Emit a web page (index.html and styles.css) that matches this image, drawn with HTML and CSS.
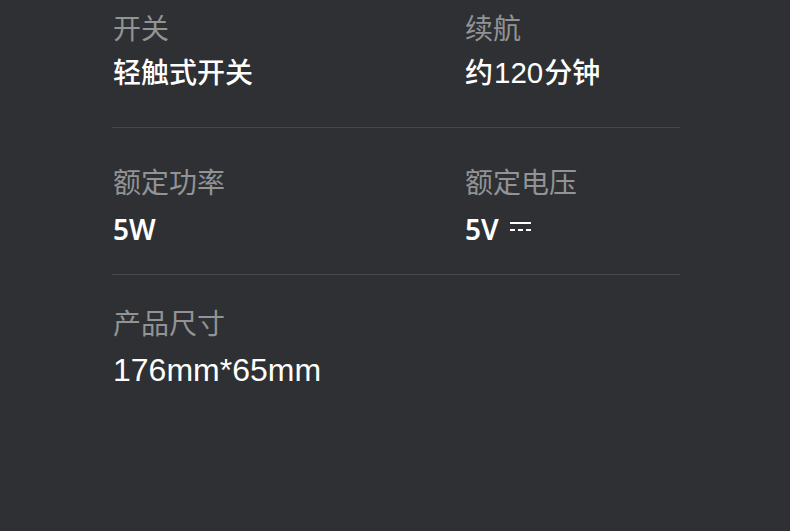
FILE: index.html
```html
<!DOCTYPE html>
<html>
  <head>
    <meta charset="UTF-8">
    <title>产品参数</title>
    <link rel="stylesheet" href="styles.css">
  </head>
  <body>
    <div class="specs">
      <div class="specRow first">
        <div class="spec">
          <div class="specLabel">开关</div>
          <div class="specValue">轻触式开关</div>
        </div>
        <div class="spec">
          <div class="specLabel">续航</div>
          <div class="specValue">约<span class="num">120</span>分钟</div>
        </div>
      </div>
      <div class="specRow">
        <div class="spec">
          <div class="specLabel">额定功率</div>
          <div class="specValue"><span class="num strong">5W</span></div>
        </div>
        <div class="spec">
          <div class="specLabel">额定电压</div>
          <div class="specValue"><span class="num strong">5V</span><span class="dc" title="直流"></span></div>
        </div>
      </div>
      <div class="specRow last">
        <div class="spec">
          <div class="specLabel">产品尺寸</div>
          <div class="specValue"><span class="num big">176mm*65mm</span></div>
        </div>
      </div>
    </div>
  </body>
</html>
```

FILE: styles.css
```css
:root {
  --background: rgb(46, 48, 51);
  --label: rgb(146, 147, 149);
  --value: rgb(255, 255, 255);
  --divider: rgb(68, 71, 75);
}
body {
  margin: 0;
  background-color: var(--background);
  font-family: "Noto Sans CJK SC", "Noto Sans", sans-serif;
  height: 531px;
  overflow: hidden;
}
.specs {
  width: 568px;
  margin-left: 112px;
}
.specRow {
  display: grid;
  grid-template-columns: 352px 1fr;
  padding: 35px 0 28px;
  border-bottom: 1px solid var(--divider);
}
.specRow.first { padding: 9px 0 38px; }
.specRow.last {
  padding-top: 29px;
  border-bottom: none;
}
.spec { padding-left: 1px; }
.specLabel {
  color: var(--label);
  font-size: 28px;
  line-height: 36px;
}
.specValue {
  color: var(--value);
  font-size: 28px;
  font-weight: 500;
  line-height: 36px;
  margin-top: 11px;
}
.specRow.first .specValue { margin-top: 8px; }
.num {
  font-family: "Liberation Sans", Arial, sans-serif;
  font-size: 29.5px;
  font-weight: normal;
  line-height: 1;
  margin: 0 1px;
}
.num.strong {
  font-family: "Noto Sans", "Liberation Sans", sans-serif;
  font-size: 28px;
  font-weight: 600;
  margin: 0;
}
.num.big {
  font-size: 32px;
  margin: 0;
}
.dc {
  display: inline-block;
  width: 21px;
  height: 9px;
  margin-left: 11px;
  vertical-align: 9px;
  background:
    linear-gradient(var(--value), var(--value)) top / 100% 2px no-repeat,
    repeating-linear-gradient(to right, var(--value) 0 5px, transparent 5px 8px) bottom / 100% 2px no-repeat;
}
```
